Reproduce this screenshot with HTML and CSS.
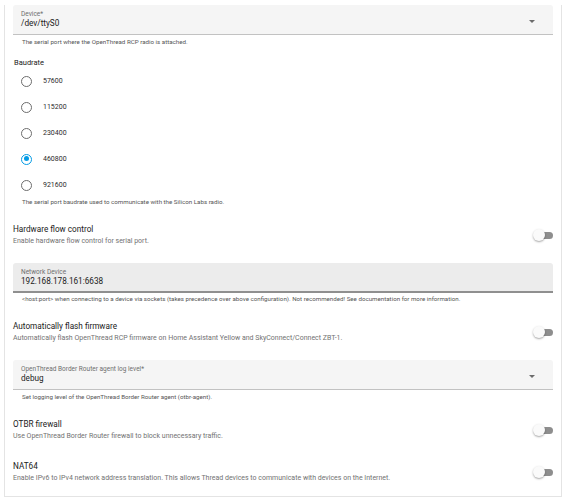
FILE: index.html
```html
<!DOCTYPE html>
<html lang="en">
<head>
  <meta charset="UTF-8" />
  <title>OpenThread Border Router – Configuration</title>
  <link rel="stylesheet" href="styles.css">
</head>
<body>

  <div class="card">

    <div class="field select">
      <div class="field-body">
        <span class="field-label">Device*</span>
        <span class="field-value">/dev/ttyS0</span>
      </div>
      <span class="arrow"></span>
    </div>
    <div class="helper">The serial port where the OpenThread RCP radio is attached.</div>

    <div class="group-title">Baudrate</div>
    <div class="radios">
      <label class="radio"><span class="dot"></span>57600</label>
      <label class="radio"><span class="dot"></span>115200</label>
      <label class="radio"><span class="dot"></span>230400</label>
      <label class="radio"><span class="dot checked"></span>460800</label>
      <label class="radio"><span class="dot"></span>921600</label>
    </div>
    <div class="helper">The serial port baudrate used to communicate with the Silicon Labs radio.</div>

    <div class="toggle-row">
      <div>
        <div class="row-title">Hardware flow control</div>
        <div class="row-desc">Enable hardware flow control for serial port.</div>
      </div>
      <span class="switch"></span>
    </div>

    <div class="field text">
      <div class="field-body">
        <span class="field-label">Network Device</span>
        <span class="field-value">192.168.178.161:6638</span>
      </div>
    </div>
    <div class="helper tight">&lt;host:port&gt; when connecting to a device via sockets (takes precedence over above configuration). Not recommended! See documentation for more information.</div>

    <div class="toggle-row">
      <div>
        <div class="row-title">Automatically flash firmware</div>
        <div class="row-desc">Automatically flash OpenThread RCP firmware on Home Assistant Yellow and SkyConnect/Connect ZBT-1.</div>
      </div>
      <span class="switch"></span>
    </div>

    <div class="field select">
      <div class="field-body">
        <span class="field-label">OpenThread Border Router agent log level*</span>
        <span class="field-value">debug</span>
      </div>
      <span class="arrow"></span>
    </div>
    <div class="helper">Set logging level of the OpenThread Border Router agent (otbr-agent).</div>

    <div class="toggle-row">
      <div>
        <div class="row-title">OTBR firewall</div>
        <div class="row-desc">Use OpenThread Border Router firewall to block unnecessary traffic.</div>
      </div>
      <span class="switch"></span>
    </div>

    <div class="toggle-row">
      <div>
        <div class="row-title">NAT64</div>
        <div class="row-desc">Enable IPv6 to IPv4 network address translation. This allows Thread devices to communicate with devices on the Internet.</div>
      </div>
      <span class="switch"></span>
    </div>

  </div>

</body>
</html>
```

FILE: styles.css
```css
* {
  box-sizing: border-box;
  font-family: Roboto, "Liberation Sans", sans-serif;
}

body {
  margin: 0;
  background: #ffffff;
  color: #212121;
}

.card {
  width: 558px;
  margin-left: 4px;
  padding: 0 8px 12px;
  border: 1px solid #e4e4e4;
  border-top: none;
}

/* filled text / select fields */
.field {
  display: flex;
  align-items: flex-start;
  height: 30px;
  padding: 5px 8px 0;
  background: #f5f5f5;
  border-bottom: 1px solid #c2c2c2;
  border-radius: 3px 3px 0 0;
}

.field.select {
  margin-top: 5px;
}

.toggle-row + .field.select {
  margin-top: 16px;
}

.field.select + .helper {
  margin-top: 3px;
}

.field.text {
  margin-top: 16px;
  background: #ececec;
  border-bottom: 2px solid #8f8f8f;
}

.field-body {
  flex: 1;
  display: flex;
  flex-direction: column;
}

.field-label {
  font-size: 6.5px;
  line-height: 8px;
  color: #6f6f6f;
}

.field-value {
  font-size: 8.2px;
  line-height: 11px;
  color: #212121;
}

.arrow {
  width: 0;
  height: 0;
  margin: 10px 10px 0 0;
  border-left: 3px solid transparent;
  border-right: 3px solid transparent;
  border-top: 3px solid #6b6b6b;
}

.helper {
  padding-left: 9px;
  font-size: 6.2px;
  line-height: 8px;
  color: #555555;
}

.helper.tight {
  margin-top: 2px;
}

/* radio group */
.group-title {
  margin-top: 12px;
  padding-left: 1px;
  font-size: 7.5px;
  line-height: 10px;
  color: #212121;
}

.radio {
  display: flex;
  align-items: center;
  height: 26px;
  padding-left: 8px;
  font-size: 7px;
  color: #2b2b2b;
}

.dot {
  width: 11px;
  height: 11px;
  margin-right: 11px;
  border: 1.3px solid #6d6d6d;
  border-radius: 50%;
  position: relative;
}

.dot.checked {
  border-color: #039be5;
}

.dot.checked::after {
  content: "";
  position: absolute;
  left: 1.7px;
  top: 1.7px;
  width: 5px;
  height: 5px;
  border-radius: 50%;
  background: #039be5;
}

/* switch rows */
.toggle-row {
  display: flex;
  align-items: center;
  justify-content: space-between;
  margin-top: 17px;
}

.toggle-row + .toggle-row {
  margin-top: 18px;
}

.row-title {
  font-size: 8.2px;
  line-height: 12px;
  color: #212121;
}

.row-desc {
  font-size: 7px;
  line-height: 12px;
  color: #727272;
}

.switch {
  position: relative;
  width: 20px;
  height: 12px;
}

.switch::before {
  content: "";
  position: absolute;
  right: 0;
  top: 2.5px;
  width: 15px;
  height: 7px;
  border-radius: 4px;
  background: #8e8e8e;
}

.switch::after {
  content: "";
  position: absolute;
  left: 0;
  top: 0;
  width: 12px;
  height: 12px;
  border-radius: 50%;
  background: #fafafa;
  box-shadow: 0 1px 2px rgba(0, 0, 0, 0.35);
}
```
